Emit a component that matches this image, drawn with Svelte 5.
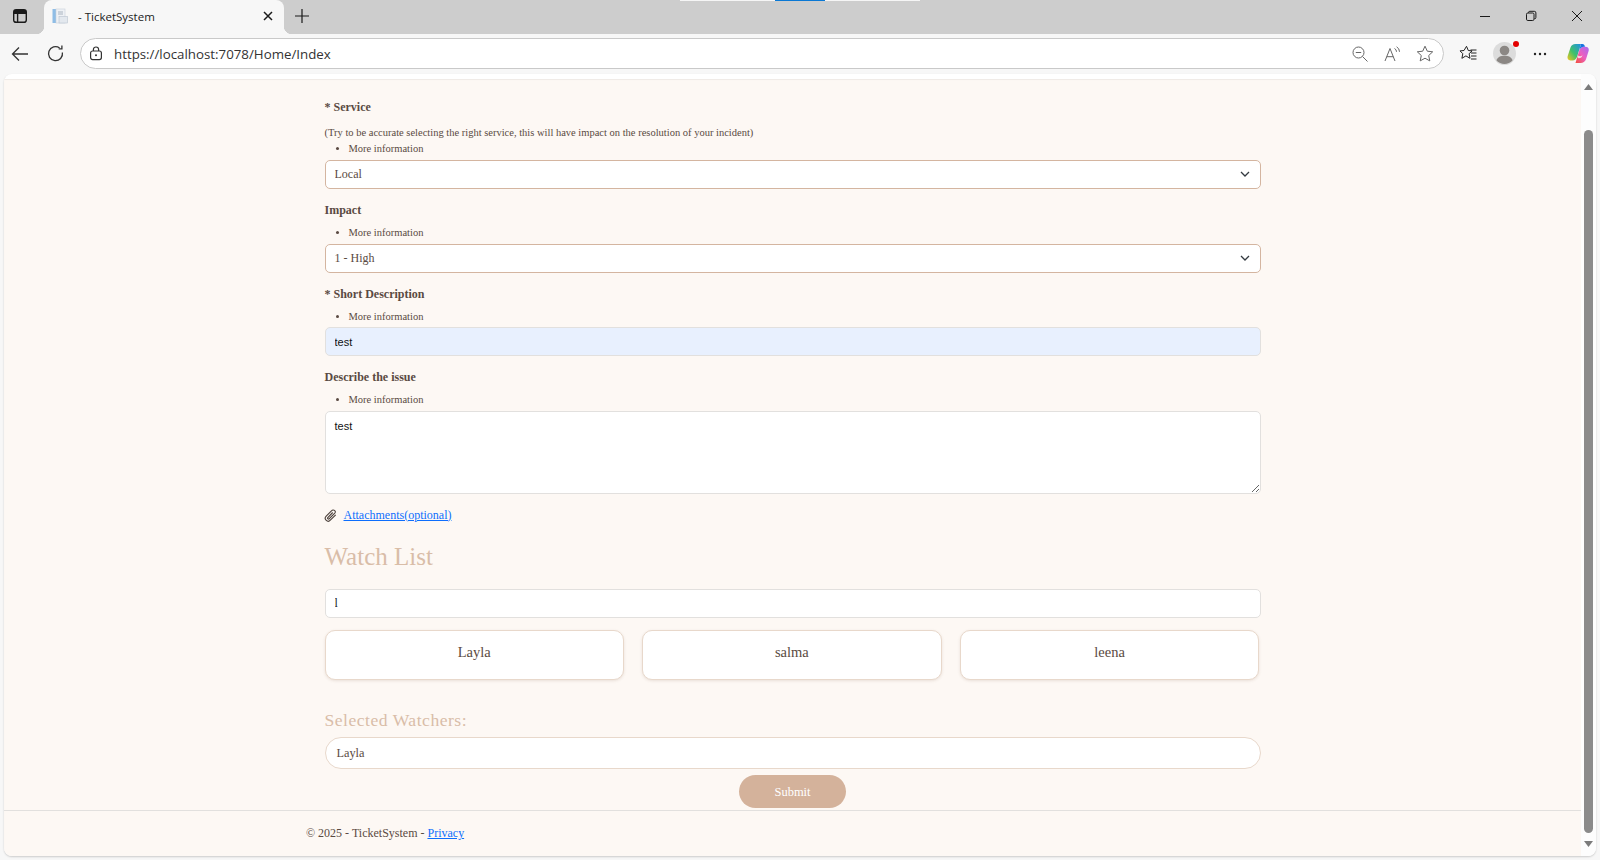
<script>
  const watchers = ['Layla', 'salma', 'leena'];
</script>

<div class="browser">
  <div class="loadbar"><i></i><b></b><i></i></div>
  <header class="tabbar">
    <button class="tabicon" aria-label="Tab actions">
      <svg width="16" height="16" viewBox="0 0 16 16" fill="none" stroke="#1a1a1a" stroke-width="1.4"><rect x="1.7" y="1.7" width="12.6" height="12.6" rx="2.4"/><path d="M1.7 5.2h12.6M5.6 5.2v9" /><rect x="2" y="2" width="12" height="3" fill="#1a1a1a" stroke="none"/></svg>
    </button>
    <div class="tab">
      <svg class="fav" width="16" height="16" viewBox="0 0 16 16"><rect x="0.5" y="1" width="4" height="14" fill="#8fbde6"/><rect x="4" y="1" width="9" height="14" fill="#eef1f5" stroke="#c8d0da" stroke-width=".6"/><path d="M6 4h5M6 6h5" stroke="#aab4c0"/><rect x="7" y="8.5" width="8.5" height="6.5" fill="#e3e8ee" stroke="#b9c3cf" stroke-width=".6"/></svg>
      <span class="tabtitle">- TicketSystem</span>
      <svg class="tabx" width="12" height="12" viewBox="0 0 12 12" stroke="#1a1a1a" stroke-width="1.5"><path d="M2 2l8 8M10 2l-8 8"/></svg>
    </div>
    <svg class="newtab" width="14" height="14" viewBox="0 0 14 14" stroke="#1a1a1a" stroke-width="1.2"><path d="M7 0v14M0 7h14"/></svg>
    <div class="winctl">
      <svg width="12" height="12" viewBox="0 0 12 12" stroke="#1a1a1a"><path d="M1 6.5h10"/></svg>
      <svg width="12" height="12" viewBox="0 0 12 12" fill="none" stroke="#1a1a1a"><rect x="1.5" y="3" width="7.5" height="7.5" rx="1.3"/><path d="M3.5 2.8v-.2A1.3 1.3 0 0 1 4.8 1.3H9.3A1.6 1.6 0 0 1 10.9 2.9V7.4A1.3 1.3 0 0 1 9.4 8.7"/></svg>
      <svg width="12" height="12" viewBox="0 0 12 12" stroke="#1a1a1a"><path d="M1 1l10 10M11 1L1 11"/></svg>
    </div>
  </header>

  <nav class="toolbar">
    <svg class="back" width="18" height="16" viewBox="0 0 18 16" fill="none" stroke="#333" stroke-width="1.3"><path d="M17 8H1.5M8 1.5L1.5 8 8 14.5"/></svg>
    <svg class="reload" width="18" height="18" viewBox="0 0 18 18" fill="none" stroke="#333" stroke-width="1.3"><path d="M15.4 7.5A7 7 0 1 1 12.6 3"/><path d="M12.9 .6v3.2h-3.2" transform="translate(2 0)"/></svg>
    <div class="omnibox">
      <svg class="lock" width="14" height="15" viewBox="0 0 14 15" fill="none" stroke="#333" stroke-width="1.2"><rect x="1.6" y="5" width="10.8" height="8.6" rx="2"/><path d="M4.4 5V3.6a2.6 2.6 0 0 1 5.2 0V5"/><circle cx="7" cy="9.3" r="1" fill="#333" stroke="none"/></svg>
      <span class="url">https://localhost:7078/Home/Index</span>
      <svg class="om1" width="16" height="16" viewBox="0 0 16 16" fill="none" stroke="#666" stroke-width="1"><circle cx="6.5" cy="6.5" r="5.5"/><path d="M3.8 6.5h5.4M10.500 10.500l5 5"/></svg>
      <svg class="om2" width="17" height="16" viewBox="0 0 17 16" fill="none" stroke="#666" stroke-width="1"><path d="M1 15L6 2.500 11 15M2.800 10.700h6.400M10.500 2.500a3.600 3.600 0 0 1 2 3.300M12.600 .8a5.800 5.800 0 0 1 2.900 5"/></svg>
      <svg class="om3" width="18" height="17" viewBox="0 0 18 17" fill="none" stroke="#666" stroke-width="1"><path d="M9 1.200l2.300 5 5.400.6-4 3.700 1.100 5.400L9 13.200l-4.800 2.700 1.100-5.400-4-3.700 5.400-.6z"/></svg>
    </div>
    <svg class="fav2" width="18" height="17" viewBox="0 0 18 17" fill="none" stroke="#222" stroke-width="1"><path d="M7.500 1.300l1.800 4.200 3.800.4-3 2.800.9 4.600-4.100-2.400-4 2.400.9-4.600-2.800-2.800 4-.4z"/><path d="M12 8h5.500M12 11h5.500M12 14h5.500M11.500 5h6"/></svg>
    <div class="avatar">
      <svg width="23" height="23" viewBox="0 0 23 23"><circle cx="11.500" cy="11.500" r="11.500" fill="#dcdcdc"/><circle cx="11.500" cy="8.500" r="4.800" fill="#8b8784"/><path d="M3.500 18.500c1-3.500 4-4.800 8-4.800s7 1.300 8 4.800a11 11 0 0 1-16 0z" fill="#8b8784"/></svg>
      <i></i>
    </div>
    <svg class="dots" width="14" height="4" viewBox="0 0 14 4" fill="#222"><circle cx="2" cy="2" r="1.200"/><circle cx="7" cy="2" r="1.200"/><circle cx="12" cy="2" r="1.200"/></svg>
    <svg class="copilot" width="22" height="21" viewBox="0 0 22 21" fill="none">
      <defs>
        <linearGradient id="cpA" x1="0" y1="1" x2="1" y2="0"><stop offset="0" stop-color="#f7c61a"/><stop offset=".45" stop-color="#3fc26a"/><stop offset="1" stop-color="#1f8fe8"/></linearGradient>
        <linearGradient id="cpB" x1="0" y1="1" x2="1" y2="0"><stop offset="0" stop-color="#f4513a"/><stop offset=".5" stop-color="#ec5fc0"/><stop offset="1" stop-color="#a46cf2"/></linearGradient>
      </defs>
      <path d="M8.500 1H14l-3.800 12.500C9.500 15.800 8 17.500 5.500 17.500H3.500C1.200 17.500 0 15.500.6 13.300L3.500 4.600C4.200 2.300 6 1 8.500 1z" fill="url(#cpA)"/>
      <path d="M13.500 20h-5l3.600-12C12.800 5.500 14.500 3.800 17 3.800h1.500c2.400 0 3.800 1.900 3.100 4.200L19 16.300C18.300 18.700 16 20 13.500 20z" fill="url(#cpB)"/>
      <path d="M14 1h1.500c1.300 0 2 .9 2.500 2.800H17c-2.500 0-4.200 1.700-4.900 4.200z" fill="#1673e0"/>
      <path d="M11 12.500c1.500 1 3 1 4.500-.2-.5 2-2 3.200-4 3-1-.1-1.200-1.800-.5-2.800z" fill="#fff" opacity=".75"/>
    </svg>
  </nav>

  <div class="frame">
    <main class="page">
      <form class="form">
        <label class="lbl first" for="svc">* Service</label>
        <p class="note">(Try to be accurate selecting the right service, this will have impact on the resolution of your incident)</p>
        <ul class="info"><li>More information</li></ul>
        <div class="selectwrap gap3">
          <select id="svc" class="sel"><option>Local</option></select>
          <svg class="chev" width="10" height="7" viewBox="0 0 10 7" fill="none" stroke="#343a40" stroke-width="1.300"><path d="M1 1l4 4 4-4"/></svg>
        </div>

        <label class="lbl" for="imp">Impact</label>
        <ul class="info tight"><li>More information</li></ul>
        <div class="selectwrap gap3">
          <select id="imp" class="sel"><option>1 - High</option></select>
          <svg class="chev" width="10" height="7" viewBox="0 0 10 7" fill="none" stroke="#343a40" stroke-width="1.300"><path d="M1 1l4 4 4-4"/></svg>
        </div>

        <label class="lbl" for="sd">* Short Description</label>
        <ul class="info tight"><li>More information</li></ul>
        <input id="sd" class="ctl auto" value="test" />

        <label class="lbl" for="desc">Describe the issue</label>
        <ul class="info tight"><li>More information</li></ul>
        <textarea id="desc" class="ctl area">test</textarea>

        <div class="attach">
          <svg class="clip" width="13" height="13" viewBox="0 0 13 13" fill="none" stroke="#4a3f39" stroke-width="1.100"><path d="M11.700 5.800L6.300 11.200A2.700 2.700 0 0 1 2 7.400L7.700 1.700A1.900 1.900 0 0 1 10.800 4.200L5.300 9.700A.9.9 0 0 1 3.800 8.500L8.700 3.500"/></svg>
          <a href="#a">Attachments(optional)</a>
        </div>

        <h2 class="watch">Watch List</h2>
        <input class="ctl search" value="l" aria-label="Search watchers" />

        <div class="cards">
          {#each watchers as w}
            <div class="card">{w}</div>
          {/each}
        </div>

        <h3 class="selected">Selected Watchers:</h3>
        <div class="pill">Layla</div>
        <div class="submitrow"><button type="button" class="submit">Submit</button></div>
      </form>

      <footer class="foot">
        <div class="footin">© 2025 - TicketSystem - <a href="#p">Privacy</a></div>
      </footer>
    </main>
    <aside class="scroll">
      <svg class="up" width="9" height="6" viewBox="0 0 9 6" fill="#7b7b7b"><path d="M4.500 0L9 6H0z"/></svg>
      <div class="thumb"></div>
      <svg class="down" width="9" height="6" viewBox="0 0 9 6" fill="#7b7b7b"><path d="M0 0h9L4.500 6z"/></svg>
    </aside>
  </div>
</div>

<style>
  :global(body) { margin: 0; overflow: hidden; background: #f7f7f7; }
  svg { display: block; flex: none; }
  .browser { width: 1600px; height: 860px; display: flex; flex-direction: column; background: #f7f7f7; position: relative; overflow: hidden; font-family: "Liberation Serif", serif; }
  .loadbar { position: absolute; top: 0; left: 680px; display: flex; height: 1px; z-index: 2; }
  .loadbar i { width: 95px; background: #f5f5f5; }
  .loadbar b { width: 50px; background: #0a78d4; }

  .tabbar { height: 34px; background: #cdcdcd; display: flex; align-items: center; flex: none; }
  .tabicon { width: 16px; height: 16px; margin: 0 0 2px 12px; padding: 0; border: 0; background: none; }
  .tab { width: 240px; height: 34px; margin-left: 16px; box-sizing: border-box; background: #f7f7f7; border-radius: 8px 8px 0 0; display: flex; align-items: center; padding: 0 10px 2px 8px; position: relative; }
  .tab::before, .tab::after { content: ""; position: absolute; bottom: 0; width: 8px; height: 8px; }
  .tab::before { left: -8px; background: radial-gradient(circle at 0 0, transparent 8px, #f7f7f7 8.500px); }
  .tab::after { right: -8px; background: radial-gradient(circle at 100% 0, transparent 8px, #f7f7f7 8.500px); }
  .tabtitle { font: 11.500px "Open Sans", sans-serif; color: #222; margin-left: 10px; flex: 1; }
  .newtab { margin: 0 0 2px 11px; }
  .winctl { margin: 0 0 2px auto; display: flex; gap: 34px; padding-right: 17px; }

  .toolbar { height: 39px; flex: none; display: flex; align-items: center; position: relative; }
  .back { margin-left: 11px; }
  .reload { margin-left: 18px; }
  .omnibox { width: 1364px; height: 31px; margin-left: 15px; box-sizing: border-box; background: #fff; border: 1px solid #c9c9c9; border-radius: 16px; display: flex; align-items: center; padding-left: 8px; }
  .url { font: 13.300px "Open Sans", sans-serif; color: #333; margin-left: 11px; flex: 1; }
  .om1 { margin-right: 16px; }
  .om2 { margin-right: 15px; }
  .om3 { margin-right: 9px; }
  .fav2 { margin-left: 15px; }
  .avatar { margin-left: 16px; position: relative; width: 23px; height: 23px; }
  .avatar i { position: absolute; top: -1px; right: -3px; width: 6px; height: 6px; border-radius: 50%; background: #e30000; }
  .dots { margin-left: 17px; }
  .copilot { margin-left: 20px; }

  .frame { flex: none; height: 782px; margin: 1px 4px 0; border-radius: 8px; background: #fff; display: flex; overflow: hidden; box-shadow: 0 1px 2px rgba(0,0,0,.18); }
  .page { width: 1577px; margin-top: 5px; background: #fdf8f4; flex: none; display: flex; flex-direction: column; color: #5a4a42; box-shadow: inset 0 1px 1px rgba(0,0,0,.06); }
  .scroll { width: 15px; background: #fdfdfd; position: relative; display: flex; flex-direction: column; align-items: center; }
  .up { margin-top: 10px; }
  .thumb { width: 9px; height: 703px; margin-top: 40px; background: #8b8b8b; border-radius: 5px; }
  .down { margin-top: 8px; }

  .form { width: 936px; margin: 0 auto; padding-top: 19px; }
  .lbl { display: block; font-size: 12px; font-weight: 700; line-height: 18px; margin-top: 12px; color: #5a4a42; }
  .lbl.first { margin-top: 0; }
  .note { margin: 9px 0 0; font-size: 10.500px; line-height: 16px; }
  .info { margin: 0; padding: 0 0 0 24px; font-size: 10.500px; line-height: 16px; }
  .info.tight { margin-top: 6px; }
  .gap3 { margin-top: 3px; }
  .selectwrap { position: relative; }
  .sel { display: block; width: 100%; height: 29px; box-sizing: border-box; appearance: none; background: #fff; border: 1px solid #d4b5a0; border-radius: 5px; padding: 0 9px 2px; font: 12px "Liberation Serif", serif; color: #5a4a42; }
  .chev { position: absolute; right: 11px; top: 11px; pointer-events: none; }
  .ctl { display: block; width: 100%; box-sizing: border-box; background: #fff; border: 1px solid #e2e0de; border-radius: 5px; padding: 0 9px; color: #111; outline: none; }
  .auto { height: 29px; margin-top: 2px; background: #e8f0fe; font: 11px "Liberation Sans", sans-serif; }
  .area { height: 83px; margin-top: 3px; padding-top: 8px; font: 11px "Liberation Sans", sans-serif; }
  .attach { display: flex; align-items: center; height: 16px; margin-top: 13px; font-size: 12px; }
  .clip { margin-left: -1px; }
  .attach a { margin-left: 7px; }
  a { color: #0d6efd; text-decoration: underline; }
  .watch { margin: 19px 0 0; font-size: 25px; line-height: 29px; font-weight: 400; color: #d9bda8; }
  .search { height: 29px; margin-top: 18px; font: 12px "Liberation Serif", serif; color: #222; }
  .cards { display: grid; grid-template-columns: repeat(3, 299.400px); gap: 18.300px; margin-top: 12px; }
  .card { height: 50px; box-sizing: border-box; background: #fff; border: 1px solid #e8d8cb; border-radius: 10px; box-shadow: 0 1px 3px rgba(120,90,60,.15); text-align: center; font-size: 14.500px; line-height: 42px; color: #5a4a42; }
  .selected { margin: 30px 0 0; font-size: 17.600px; line-height: 20px; font-weight: 400; letter-spacing: .5px; color: #d9bda8; }
  .pill { height: 32px; margin-top: 7px; box-sizing: border-box; background: #fff; border: 1px solid #e8d8cb; border-radius: 16px; padding-left: 11px; font-size: 12.300px; line-height: 30px; color: #5a4a42; }
  .submitrow { display: flex; justify-content: center; margin-top: 6px; }
  .submit { width: 107px; height: 33px; border: 0; border-radius: 17px; background: #d4b29b; color: #fff; font: 400 12.500px "Liberation Serif", serif; padding: 2px 0 0; }
  .foot { border-top: 1px solid #e2e0de; margin-top: 2px; flex: 1; }
  .footin { width: 974px; margin: 0 auto; padding: 14px 0 0 1px; box-sizing: content-box; font-size: 12px; line-height: 16px; }
</style>
